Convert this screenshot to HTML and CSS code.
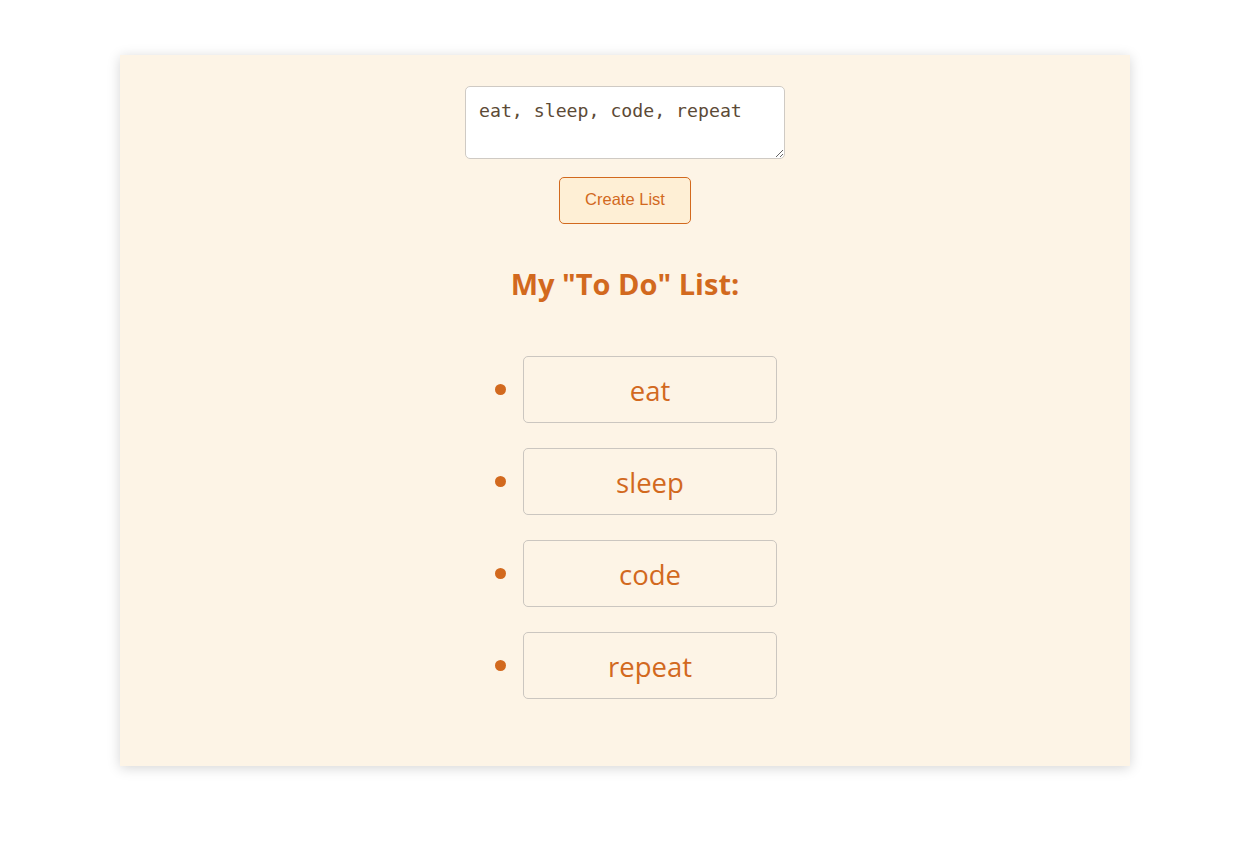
FILE: index.html
```html
<!DOCTYPE html>
<html lang="en">
<head>
<meta charset="utf-8">
<title>To Do List</title>
<link rel="stylesheet" href="styles.css">
</head>
<body>
  <main class="panel">
    <textarea class="input">eat, sleep, code, repeat</textarea>
    <button class="create-btn" type="button">Create List</button>
    <h2 class="title">My "To Do" List:</h2>
    <ul class="todo-list">
      <li class="todo-row"><div class="todo-item">eat</div></li>
      <li class="todo-row"><div class="todo-item">sleep</div></li>
      <li class="todo-row"><div class="todo-item">code</div></li>
      <li class="todo-row"><div class="todo-item">repeat</div></li>
    </ul>
  </main>
</body>
</html>
```
FILE: styles.css
```css
html, body {
  margin: 0;
  padding: 0;
  background: #ffffff;
}

body {
  padding: 55px 115px 81px 120px;
  font-family: "Open Sans", "Noto Sans", sans-serif;
}

.panel {
  width: 1010px;
  height: 711px;
  box-sizing: border-box;
  background: #fdf4e6;
  box-shadow: 0 2px 12px rgba(0, 0, 0, 0.17);
  display: flex;
  flex-direction: column;
  align-items: center;
  padding-top: 31px;
}

.input {
  width: 320px;
  height: 73px;
  box-sizing: border-box;
  border: 1px solid #cfcac4;
  border-radius: 5px;
  background: #ffffff;
  padding: 13px 13px 9px;
  font-family: "DejaVu Sans Mono", "Liberation Mono", monospace;
  font-size: 18.2px;
  color: #5c4a36;
  resize: vertical;
  margin: 0;
}

.create-btn {
  margin-top: 18px;
  width: 132px;
  height: 47px;
  box-sizing: border-box;
  border: 1px solid #d2691e;
  border-radius: 5px;
  background: #feefd5;
  color: #d2691e;
  font-family: "Liberation Sans", Arial, sans-serif;
  font-size: 16.5px;
  padding: 0 0 2px;
}

.title {
  margin: 40px 0 0;
  color: #d2691e;
  font-size: 29px;
  font-weight: 700;
  line-height: 40px;
}

.todo-list {
  list-style: none;
  margin: 52px 0 0;
  padding: 0 0 0 22px;
  display: flex;
  flex-direction: column;
  gap: 25px;
}

.todo-row {
  display: flex;
  align-items: center;
  gap: 17px;
}

.todo-row::before {
  content: "";
  width: 11px;
  height: 11px;
  border-radius: 50%;
  background: #d2691e;
  flex: none;
}

.todo-item {
  width: 254px;
  height: 67px;
  box-sizing: border-box;
  border: 1px solid #cbc6c0;
  border-radius: 5px;
  display: flex;
  align-items: center;
  justify-content: center;
  color: #d2691e;
  font-size: 27.5px;
  padding-top: 2px;
}
```
